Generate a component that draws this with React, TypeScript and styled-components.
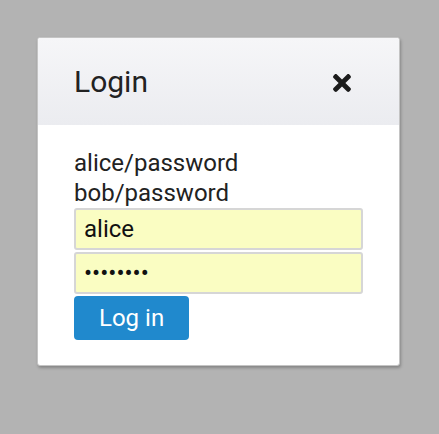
import React from "react";
import styled, { createGlobalStyle } from "styled-components";
import { FaTimes } from "react-icons/fa";

const Global = createGlobalStyle`
  html, body { margin: 0; padding: 0; background: #b3b3b3; }
  body { font-family: Roboto, "Liberation Sans", Arial, sans-serif; color: #222; }
  * { box-sizing: border-box; }
`;

const Page = styled.div`
  padding: 37px 39px 0 37px;
  min-height: 434px;
`;

const Dialog = styled.div`
  width: 363px;
  background: #fff;
  border: 1px solid #c4c4c4;
  border-radius: 3px;
  box-shadow: 1px 2px 3px rgba(0, 0, 0, 0.25);
  overflow: hidden;
`;

const Header = styled.div`
  height: 87px;
  display: flex;
  align-items: center;
  justify-content: space-between;
  padding: 0 44px 0 36px;
  background: linear-gradient(#f6f6f8, #ebecf0);
`;

const Title = styled.h4`
  margin: 0;
  font-size: 30px;
  font-weight: 400;
  line-height: 1;
  color: #222;
  padding-top: 1px;
`;

const Close = styled.button`
  border: 0;
  background: none;
  padding: 0;
  display: flex;
  color: #1c1c1c;
  cursor: pointer;
  margin-top: 2px;
`;

const Body = styled.div`
  padding: 24px 36px 25px 36px;
`;

const Hint = styled.div`
  font-size: 24px;
  line-height: 29.5px;
  color: #222;
`;

const Field = styled.input`
  display: block;
  width: 100%;
  height: 42px;
  margin: 0 0 2px 0;
  padding: 0 8px;
  font-family: Roboto, "Liberation Sans", Arial, sans-serif;
  font-size: 24px;
  color: #111;
  background: #fafdc2;
  border: 2px solid #d6d6d6;
  border-radius: 3px;
  outline: none;
`;

const Button = styled.button`
  display: block;
  height: 44px;
  margin-top: 1px;
  padding: 0 25px;
  font-family: Roboto, "Liberation Sans", Arial, sans-serif;
  font-size: 24px;
  color: #fff;
  background: #2089cd;
  border: 0;
  border-radius: 4px;
  cursor: pointer;
`;

export default function App() {
  return (
    <>
      <Global />
      <Page>
        <Dialog>
          <Header>
            <Title>Login</Title>
            <Close aria-label="close">
              <FaTimes size={26} />
            </Close>
          </Header>
          <Body>
            <Hint>alice/password</Hint>
            <Hint>bob/password</Hint>
            <Field type="text" defaultValue="alice" />
            <Field type="password" defaultValue="password" />
            <Button>Log in</Button>
          </Body>
        </Dialog>
      </Page>
    </>
  );
}
